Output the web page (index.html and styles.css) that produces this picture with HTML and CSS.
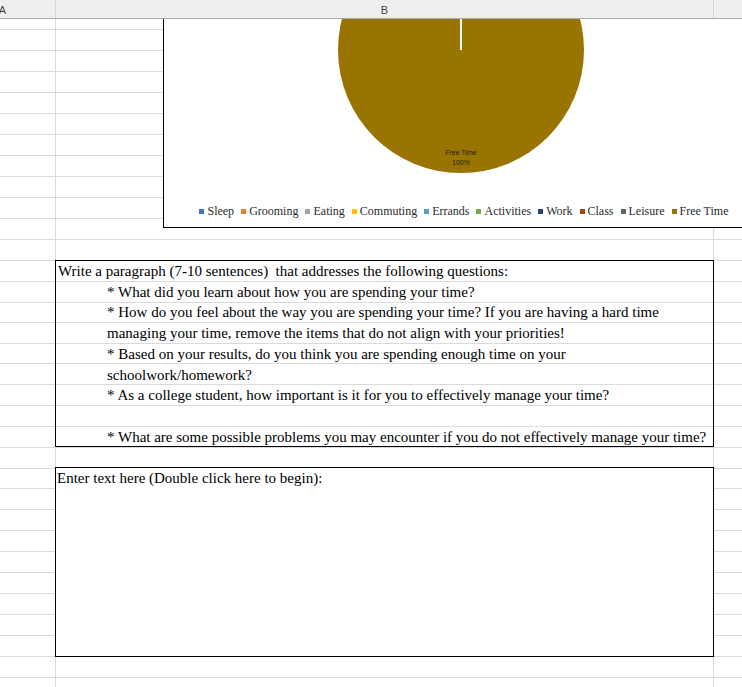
FILE: index.html
```html
<!DOCTYPE html>
<html lang="en">
<head>
<meta charset="utf-8">
<title>Time Management Sheet</title>
<link rel="stylesheet" href="styles.css">
</head>
<body>
<div class="sheet">
  <div class="colhead">
    <div class="ch ch-a">A</div>
    <div class="ch ch-b">B</div>
    <div class="ch ch-c"></div>
  </div>
  <div class="rows">
    <div class="row r-first"></div>
    <div class="row"></div><div class="row"></div><div class="row"></div><div class="row"></div>
    <div class="row"></div><div class="row"></div><div class="row"></div><div class="row"></div>
    <div class="row"></div><div class="row"></div><div class="row"></div><div class="row"></div>
    <div class="row"></div>
    <div class="row r20"></div>
    <div class="row"></div>
    <div class="row r20"></div>
    <div class="row"></div><div class="row"></div><div class="row"></div><div class="row"></div><div class="row"></div>
    <div class="row r20"></div>
    <div class="row"></div><div class="row"></div><div class="row"></div>
    <div class="row"></div><div class="row"></div><div class="row"></div>
    <div class="row"></div><div class="row"></div><div class="row"></div>
    <div class="row"></div>
  </div>

  <div class="chart">
    <div class="pie"></div>
    <div class="slice-line"></div>
    <div class="pie-label">Free Time<br>100%</div>
    <div class="legend">
      <span class="li"><i class="m-sleep"></i>Sleep</span>
      <span class="li"><i class="m-groom"></i>Grooming</span>
      <span class="li"><i class="m-eat"></i>Eating</span>
      <span class="li"><i class="m-comm"></i>Commuting</span>
      <span class="li"><i class="m-err"></i>Errands</span>
      <span class="li"><i class="m-act"></i>Activities</span>
      <span class="li"><i class="m-work"></i>Work</span>
      <span class="li"><i class="m-class"></i>Class</span>
      <span class="li"><i class="m-leis"></i>Leisure</span>
      <span class="li"><i class="m-free"></i>Free Time</span>
    </div>
  </div>

  <div class="tbox tbox-q">
    <p>Write a paragraph (7-10 sentences)&nbsp; that addresses the following questions:</p>
    <p class="ind">* What did you learn about how you are spending your time?</p>
    <p class="ind">* How do you feel about the way you are spending your time? If you are having a hard time<br>managing your time, remove the items that do not align with your priorities!</p>
    <p class="ind">* Based on your results, do you think you are spending enough time on your<br>schoolwork/homework?</p>
    <p class="ind">* As a college student, how important is it for you to effectively manage your time?</p>
    <p class="ind">&nbsp;</p>
    <p class="ind">* What are some possible problems you may encounter if you do not effectively manage your time?</p>
  </div>

  <div class="tbox tbox-a">
    <p>Enter text here (Double click here to begin):</p>
  </div>
</div>
</body>
</html>
```

FILE: styles.css
```css
html, body {
  margin: 0;
  padding: 0;
  background: #fff;
  overflow: hidden;
}

.sheet {
  position: relative;
  width: 742px;
  height: 687px;
  overflow: hidden;
  background: #fff;
}

/* column header */
.colhead {
  display: flex;
  height: 18px;
  background: #efefef;
  border-bottom: 1px solid #ababab;
  font-family: "Liberation Sans", Arial, sans-serif;
  font-size: 11px;
  color: #444;
}
.ch {
  box-sizing: border-box;
  display: flex;
  align-items: center;
  justify-content: center;
  border-right: 1px solid #d6d6d6;
  padding-top: 2px;
}
.ch-a {
  width: 56px;
  justify-content: flex-end;
  padding-right: 49px;
}
.ch-b {
  width: 658px;
}
.ch-c {
  flex: 1;
  border-right: none;
}

/* grid rows */
.rows {
  background:
    linear-gradient(#dadada, #dadada) 55px 0 / 1px 100% no-repeat,
    linear-gradient(#dadada, #dadada) 713px 0 / 1px 100% no-repeat;
}
.row {
  height: 20px;
  border-bottom: 1px solid #dadada;
}
.row.r20 {
  height: 19px;
}
.row.r-first {
  height: 10px;
}

/* chart */
.chart {
  position: absolute;
  left: 163px;
  top: 19px;
  width: 600px;
  height: 208px;
  border-left: 1px solid #000;
  border-bottom: 1px solid #000;
  background: #fff;
  overflow: hidden;
  display: flex;
  flex-direction: column;
  justify-content: flex-end;
}
.pie {
  position: absolute;
  left: 174px;
  top: -92px;
  width: 246px;
  height: 246px;
  border-radius: 50%;
  background: #9a7400;
}
.slice-line {
  position: absolute;
  left: 296px;
  top: 0;
  width: 2px;
  height: 31px;
  background: #fff;
}
.pie-label {
  position: absolute;
  left: 257px;
  top: 129px;
  width: 80px;
  text-align: center;
  font-family: "Liberation Sans", Arial, sans-serif;
  font-size: 7px;
  line-height: 10px;
  color: #1e1e1e;
}
.legend {
  display: flex;
  justify-content: center;
  gap: 7px;
  margin-bottom: 8px;
  font-family: "Liberation Serif", "Times New Roman", serif;
  font-size: 12px;
  line-height: 16px;
  color: #2b2b2b;
  white-space: nowrap;
}
.li {
  display: flex;
  align-items: center;
  gap: 3px;
}
.li i {
  display: block;
  width: 5px;
  height: 5px;
}
.m-sleep { background: #4472c4; }
.m-groom { background: #ed7d31; }
.m-eat { background: #a5a5a5; }
.m-comm { background: #ffc000; }
.m-err { background: #5b9bd5; }
.m-act { background: #70ad47; }
.m-work { background: #264478; }
.m-class { background: #9e480e; }
.m-leis { background: #636363; }
.m-free { background: #997300; }

/* text boxes */
.tbox {
  position: absolute;
  left: 55px;
  width: 659px;
  box-sizing: border-box;
  border: 1px solid #000;
  font-family: "Liberation Serif", "Times New Roman", serif;
  font-size: 15px;
  line-height: 20.7px;
  color: #000;
  white-space: nowrap;
  overflow: hidden;
}
.tbox p {
  margin: 0;
}
.tbox-q {
  top: 260px;
  height: 187px;
  padding: 0 3px 0 2px;
}
.tbox-q .ind {
  padding-left: 49px;
}
.tbox-a {
  top: 467px;
  height: 190px;
  padding: 0 3px 0 1px;
  background: #fff;
}
```
